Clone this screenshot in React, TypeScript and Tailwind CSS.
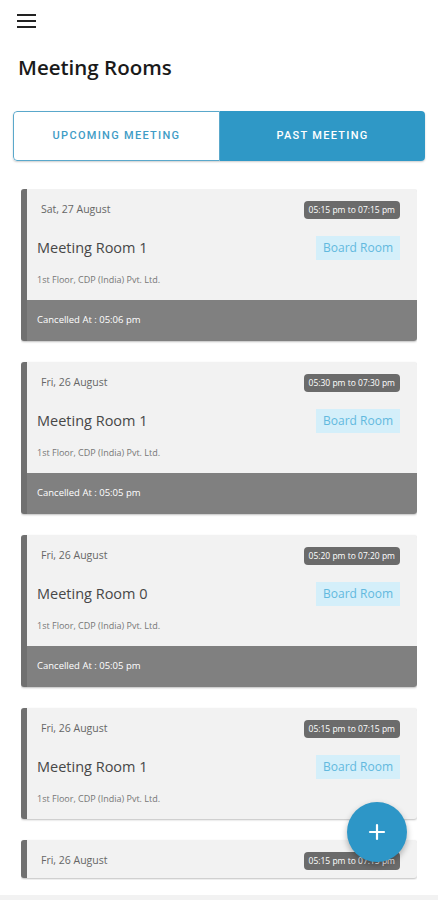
import { Plus } from "lucide-react";

const meetings = [
  { date: "Sat, 27 August", time: "05:15 pm to 07:15 pm", room: "Meeting Room 1", cancelled: "05:06 pm" },
  { date: "Fri, 26 August", time: "05:30 pm to 07:30 pm", room: "Meeting Room 1", cancelled: "05:05 pm" },
  { date: "Fri, 26 August", time: "05:20 pm to 07:20 pm", room: "Meeting Room 0", cancelled: "05:05 pm" },
  { date: "Fri, 26 August", time: "05:15 pm to 07:15 pm", room: "Meeting Room 1", cancelled: "" },
  { date: "Fri, 26 August", time: "05:15 pm to 07:15 pm", room: "Meeting Room 1", cancelled: "", partial: true },
];

function MeetingCard({ m }: { m: (typeof meetings)[number] }) {
  return (
    <div className="shrink-0 rounded-[3px] bg-[#f2f2f2] border-l-[6px] border-[#707070] shadow-[0_1px_2px_rgba(0,0,0,0.25)] overflow-hidden">
      <div className={m.partial ? "pt-[12px] pb-[8px] pl-[10px] pr-[17px]" : "pt-[12px] pb-[13px] pl-[10px] pr-[17px]"}>
        <div className="flex items-center justify-between h-[18px]">
          <span className="pl-[4px] text-[10.5px] text-[#666]">{m.date}</span>
          <span className="h-[18px] px-[5px] flex items-center rounded-[4px] bg-[#6b6b6b] text-[8.5px] text-white">
            {m.time}
          </span>
        </div>
        {!m.partial && (
          <>
            <div className="flex items-center justify-between h-[24px] mt-[17px]">
              <span className="text-[14.5px] text-[#474747]">{m.room}</span>
              <span className="h-[24px] px-[7px] flex items-center bg-[#d4effa] text-[12px] text-[#62b9de]">
                Board Room
              </span>
            </div>
            <div className="h-[14px] mt-[13px] flex items-center text-[9px] text-[#777]">
              1st Floor, CDP (India) Pvt. Ltd.
            </div>
          </>
        )}
      </div>
      {m.cancelled && (
        <div className="h-[41px] bg-[#808080] flex items-center pl-[10px] text-[9.5px] text-white">
          Cancelled At : {m.cancelled}
        </div>
      )}
    </div>
  );
}

export default function App() {
  return (
    <div className="relative w-full h-[900px] bg-white flex flex-col overflow-hidden font-['Open_Sans',sans-serif]">
      <div className="pl-[17px] pt-[14px] flex flex-col gap-[4px] w-[36px]">
        <span className="block w-[19px] h-[2px] bg-[#222]" />
        <span className="block w-[19px] h-[2px] bg-[#222]" />
        <span className="block w-[19px] h-[2px] bg-[#222]" />
      </div>
      <h1 className="mt-[25px] pl-[18px] text-[20.5px] leading-[28px] font-semibold text-[#1a1a1a]">
        Meeting Rooms
      </h1>

      <div className="mx-[13px] mt-[30px] h-[50px] flex rounded-[4px] overflow-hidden font-['Roboto',sans-serif] font-medium text-[11px] tracking-[1.3px] shadow-[0_1px_2px_rgba(0,0,0,0.2)]">
        <div className="w-[207px] flex items-center justify-center border border-[#5aa8cb] rounded-l-[4px] text-[#3f9cc6] bg-white">
          UPCOMING MEETING
        </div>
        <div className="flex-1 flex items-center justify-center bg-[#2f98c6] text-white">
          PAST MEETING
        </div>
      </div>

      <div className="mt-[28px] mx-[21px] h-[691px] flex flex-col gap-[21px] overflow-hidden pb-[2px]">
        {meetings.map((m, i) => (
          <MeetingCard key={i} m={m} />
        ))}
      </div>

      <div className="mt-auto h-[5px] bg-[#f2f2f2]" />

      <button className="absolute right-[31px] bottom-[38px] w-[60px] h-[60px] rounded-full bg-[#2d96c7] flex items-center justify-center shadow-[0_3px_6px_rgba(0,0,0,0.3)]">
        <Plus className="w-[24px] h-[24px] text-white" strokeWidth={2.2} />
      </button>
    </div>
  );
}
